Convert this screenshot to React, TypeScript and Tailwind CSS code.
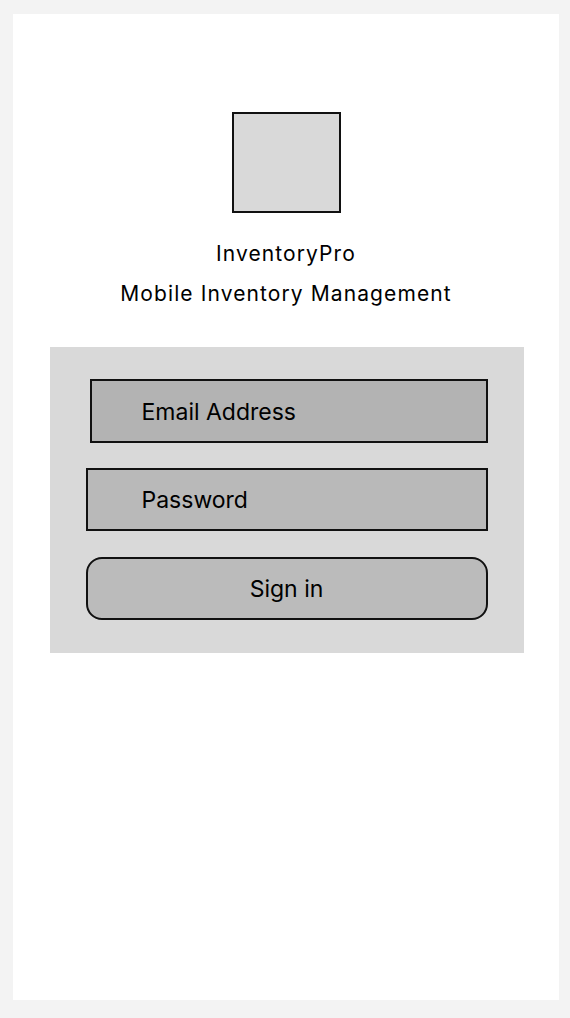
import React from 'react';

const font = { fontFamily: 'Inter, "Noto Sans", sans-serif' };

const App: React.FC = () => {
    return (
        <div className="min-h-screen bg-[#f3f3f3] pl-[13px] pt-[14px] text-black" style={font}>
            <div className="w-[546px] h-[986px] bg-white flex flex-col items-center">
                {/* logo placeholder */}
                <div className="mt-[98px] ml-[1px] w-[109px] h-[101px] bg-[#d9d9d9] border-2 border-[#111]" />

                <h1 className="mt-[27px] text-[21px] leading-[28px] tracking-[1.1px] font-normal">InventoryPro</h1>
                <p className="mt-[12px] text-[21px] leading-[28px] tracking-[1.1px]">Mobile Inventory Management</p>

                <form className="mt-[39px] ml-[1px] w-[474px] h-[306px] bg-[#d9d9d9] flex flex-col pt-[32px]">
                    <div className="ml-[40px] w-[398px] h-[64px] bg-[#b3b3b3] border-2 border-[#111] flex items-center pl-[50px] pt-[2px] text-[23px]">
                        Email Address
                    </div>
                    <div className="mt-[25px] ml-[36px] w-[402px] h-[63px] bg-[#b9b9b9] border-2 border-[#111] flex items-center pl-[54px] pt-[2px] text-[23px]">
                        Password
                    </div>
                    <button
                        type="button"
                        className="mt-[26px] ml-[36px] w-[402px] h-[63px] bg-[#bbbbbb] border-2 border-[#111] rounded-[16px] pt-[2px] text-[23px]"
                    >
                        Sign in
                    </button>
                </form>
            </div>
        </div>
    );
};

export default App;
